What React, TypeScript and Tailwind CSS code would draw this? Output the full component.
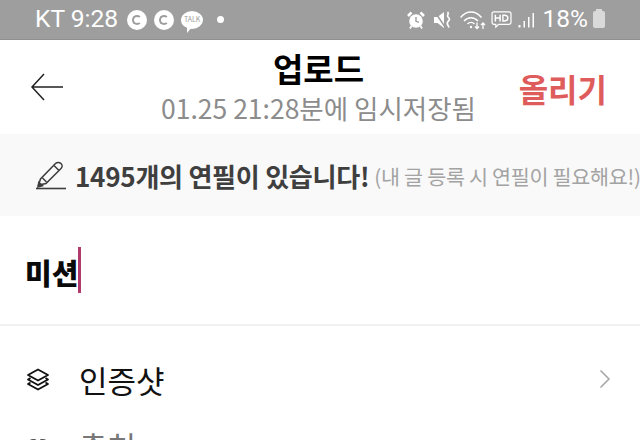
import { ChevronRight, Link2 } from "lucide-react";

const font = { fontFamily: '"Noto Sans CJK KR", "Noto Sans", sans-serif' };

function AlarmIcon() {
  return (
    <svg width="18" height="18" viewBox="0 0 18 18" fill="none">
      <circle cx="9" cy="10" r="6.800" fill="#fff" />
      <path d="M9 6v4.300l3 1" stroke="#9e9e9e" strokeWidth="1.400" fill="none" />
      <path d="M1 5 4.500 1.500M17 5 13.500 1.500" stroke="#fff" strokeWidth="2.600" />
      <path d="M4.500 15 3 17.500M13.500 15l1.500 2.500" stroke="#fff" strokeWidth="1.800" />
    </svg>
  );
}

function MuteIcon() {
  return (
    <svg width="18" height="18" viewBox="0 0 18 18" fill="none">
      <path d="M0 6h3.500L10 1v16l-6.500-5H0z" fill="#fff" />
      <path d="M1 1l10 15" stroke="#9e9e9e" strokeWidth="1.500" />
      <path d="M13.500 1c2.500 2-1.500 3 .5 5s2 2.500 0 4.500 0 3.500 1 6" stroke="#fff" strokeWidth="1.700" />
    </svg>
  );
}

function WifiIcon() {
  return (
    <svg width="26" height="20" viewBox="0 0 26 20" fill="none" stroke="#fff" strokeWidth="1.500">
      <path d="M0.500 7.500c6-7.500 15-7.500 21 0" />
      <path d="M4 11c4-4.500 10-4.500 14 0" />
      <path d="M7.500 14c2-2 5-2 7 0" />
      <circle cx="11" cy="17" r="1.200" fill="#fff" stroke="none" />
      <path d="M17 12.500v6M15 16.500l2 2 2-2" strokeWidth="1.300" />
      <path d="M23 19v-6M21 15l2-2 2 2" strokeWidth="1.300" />
    </svg>
  );
}

function HdIcon() {
  return (
    <svg width="21" height="18" viewBox="0 0 22 19" fill="none">
      <path d="M3 1h16a2 2 0 0 1 2 2v9a2 2 0 0 1-2 2H8l-3 3v-3H3a2 2 0 0 1-2-2V3a2 2 0 0 1 2-2z" stroke="#fff" strokeWidth="1.300" />
      <path d="M4.500 4v7M9.500 4v7M4.500 7.500h5" stroke="#fff" strokeWidth="1.600" />
      <path d="M12.500 4.500v6h1.800c2.300 0 3.400-1.200 3.400-3s-1.100-3-3.400-3z" stroke="#fff" strokeWidth="1.500" />
    </svg>
  );
}

function SignalIcon() {
  return (
    <svg width="17" height="18" viewBox="0 0 17 18" fill="#fff">
      <rect x="0.500" y="14" width="2" height="2.500" />
      <rect x="5.500" y="10" width="1.500" height="6.500" />
      <rect x="10" y="6" width="1.500" height="10.500" />
      <rect x="14.500" y="2" width="1.500" height="14.500" />
    </svg>
  );
}

function PencilIcon() {
  return (
    <svg className="shrink-0" width="30" height="30" viewBox="0 0 30 30" fill="none" stroke="#3d3d3d" strokeWidth="1.500">
      <path d="M2.500 25 4.500 19 19.500 3.500c1.500-1.500 4-1.500 5.500 0s1.500 3.500 0 5L10 23.500z" />
      <path d="M18 5.500 23 10.500M6.500 18l4 4" />
      <path d="M2 27l.8-4.500 3.700 3.200z" fill="#3d3d3d" />
      <path d="M0 28.500h30" strokeWidth="1.600" />
    </svg>
  );
}

function LayersIcon() {
  return (
    <svg width="24" height="24" viewBox="0 0 24 24" fill="none" stroke="#111" strokeWidth="1.800" strokeLinejoin="round">
      <path d="M12 2.500 22 8l-10 5.500L2 8z" />
      <path d="M4.500 11 2 12.500 12 18l10-5.500L19.500 11" />
      <path d="M4.500 15.500 2 17l10 5.500L22 17l-2.500-1.500" />
    </svg>
  );
}

function TalkIcon() {
  return (
    <div className="relative flex h-[18px] w-[22px] items-center justify-center rounded-[50%] bg-white">
      <span className="text-[7px] leading-none text-[#9e9e9e]" style={font}>TALK</span>
      <span className="absolute bottom-[-4px] left-[6px] h-0 w-0 border-t-[6px] border-r-[5px] border-t-white border-r-transparent" />
    </div>
  );
}

function CircleC() {
  return (
    <span className="flex size-[20px] items-center justify-center rounded-full bg-white">
      <span className="size-[10px] rounded-full border-[2.500px] border-[#9e9e9e] border-r-white" />
    </span>
  );
}

export default function App() {
  return (
    <div className="h-[440px] w-[640px] overflow-hidden bg-white" style={font}>
      <div className="flex h-[40px] items-center justify-between border-b border-[#8f8f8f] bg-[#9e9e9e] pr-[35px] pl-[35px] text-white">
        <div className="flex items-center">
          <span className="text-[24.600px] leading-none" style={{ fontFamily: "Roboto, sans-serif" }}>KT 9:28</span>
          <div className="ml-[9px] flex items-center gap-[7px]">
            <CircleC />
            <CircleC />
            <TalkIcon />
          </div>
          <span className="ml-[14px] size-[7px] rounded-full bg-white" />
        </div>
        <div className="flex items-center">
          <AlarmIcon />
          <span className="ml-[9px]"><MuteIcon /></span>
          <span className="ml-[8px]"><WifiIcon /></span>
          <span className="ml-[5px]"><HdIcon /></span>
          <span className="ml-[6px]"><SignalIcon /></span>
          <span className="ml-[8px] text-[24.500px] leading-none" style={{ fontFamily: "Roboto, sans-serif" }}>18%</span>
          <span className="relative ml-[5px] h-[17px] w-[12px] rounded-[2px] bg-[#d9d9d9]">
            <span className="absolute top-[-2px] left-[3px] h-[2px] w-[6px] bg-[#d9d9d9]" />
          </span>
        </div>
      </div>

      <header className="grid h-[94px] grid-cols-[1fr_auto_1fr] items-center pr-[33px] pl-[30px]">
        <svg width="34" height="30" viewBox="0 0 34 30" fill="none" stroke="#222" strokeWidth="1.500">
          <path d="M33 15H2M14 2 2 15l12 13" />
        </svg>
        <div className="flex flex-col items-center gap-[4px] whitespace-nowrap">
          <h1 className="text-[33px] leading-[38px] font-bold text-black">업로드</h1>
          <p className="text-[26.500px] leading-[34px] text-[#8c8c8c]">01.25 21:28분에 임시저장됨</p>
        </div>
        <button className="justify-self-end pt-[2px] text-[32px] leading-none font-bold text-[#df5c5c]">올리기</button>
      </header>

      <div className="flex h-[82px] items-center overflow-hidden whitespace-nowrap bg-[#f9f9f9] pl-[36px]">
        <PencilIcon />
        <span className="ml-[9px] shrink-0 pt-[4px] text-[26.100px] font-bold tracking-[-0.300px] text-[#3f3f3f]">1495개의 연필이 있습니다!</span>
        <span className="ml-[5px] shrink-0 pt-[4px] text-[20.700px] tracking-[-0.300px] text-[#a3a3a3]">(내 글 등록 시 연필이 필요해요!)</span>
      </div>

      <div className="flex h-[110px] items-center border-b-2 border-[#f1f1f1] pb-[1px] pl-[25px]">
        <span className="pt-[5px] text-[29px] leading-none font-black text-[#0a0a0a]">미션</span>
        <span className="h-[46px] w-[3px] bg-[#b03a6b]" />
      </div>

      <div className="flex flex-col pt-[20px]">
        <div className="flex h-[66px] items-center justify-between pr-[19px] pl-[26px]">
          <div className="flex items-center gap-[29px]">
            <LayersIcon />
            <span className="text-[31px] leading-none text-[#111]">인증샷</span>
          </div>
          <ChevronRight className="size-[32px] text-[#a8a8a8]" strokeWidth={1.300} />
        </div>
        <div className="flex h-[66px] items-center gap-[29px] pl-[26px]">
          <Link2 className="size-[24px] text-[#555]" strokeWidth={1.800} />
          <span className="text-[31px] leading-none text-[#777]">출처</span>
        </div>
      </div>
    </div>
  );
}
